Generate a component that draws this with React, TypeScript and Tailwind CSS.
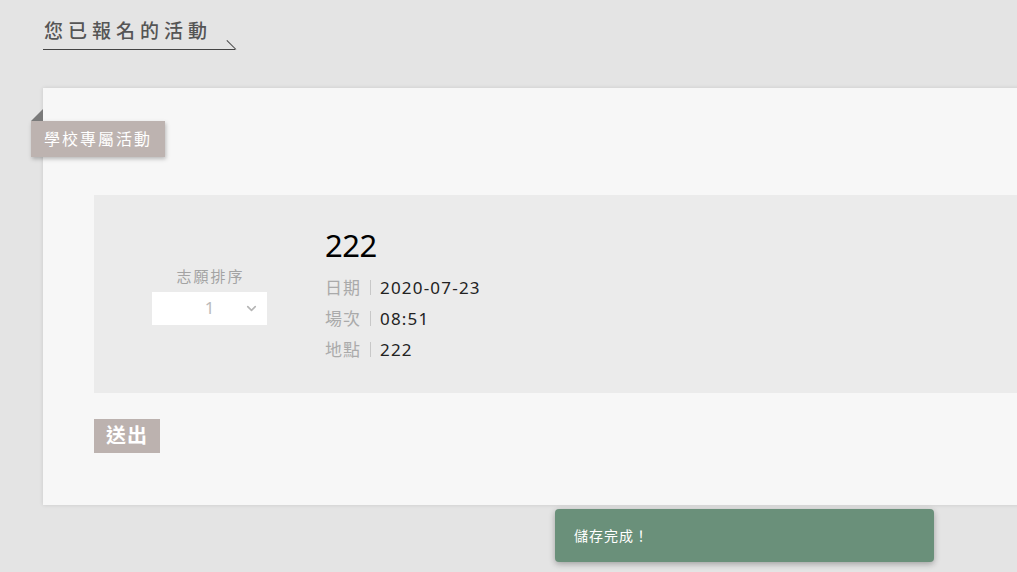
import { ChevronDown } from "lucide-react";

const font = { fontFamily: '"Noto Sans", "Noto Sans CJK TC", sans-serif' };

const rows = [
  { label: "日期", value: "2020-07-23" },
  { label: "場次", value: "08:51" },
  { label: "地點", value: "222" },
];

export default function App() {
  return (
    <div
      className="relative h-[572px] w-[1017px] overflow-hidden bg-[#e4e4e4]"
      style={font}
    >
      <div className="pl-[43px] pt-[17px]">
        <div className="relative inline-block pr-[23px] pb-[4px] border-b border-[#444]">
          <h2 className="pl-[1px] text-[19px] font-medium leading-[28px] tracking-[5px] text-[#555]">
            您已報名的活動
          </h2>
          <span className="absolute right-[-1px] bottom-[-1px] h-px w-[13px] origin-right rotate-[45deg] bg-[#444]" />
        </div>
      </div>

      <div className="relative mt-[38px] ml-[43px] w-[1000px] bg-[#f7f7f7] pl-[51px] pt-[107px] pb-[52px] shadow-[0_0_4px_rgba(0,0,0,0.12)]">
        <div className="absolute left-[-12px] top-[33px]">
          <span className="absolute left-0 top-[-12px] h-0 w-0 border-l-[12px] border-b-[12px] border-l-transparent border-b-[#7a7a7a]" />
          <div className="flex h-[36px] items-center bg-[#bdb3b0] px-[13px] text-[16px] tracking-[2px] text-white shadow-[1px_2px_4px_rgba(0,0,0,0.25)]">
            學校專屬活動
          </div>
        </div>

        <div className="flex h-[198px] items-center bg-[#ebebeb]">
          <div className="ml-[58px] flex w-[115px] flex-col items-center">
            <span className="pl-[2px] text-[15px] leading-[24px] tracking-[2px] text-[#a3a3a3]">志願排序</span>
            <div className="relative mt-[4px] flex h-[33px] w-[115px] items-center justify-center bg-white">
              <span className="text-[17px] text-[#bbbbbb]">1</span>
              <ChevronDown className="absolute right-[8px] top-[9px] h-[15px] w-[15px] text-[#b5b5b5]" strokeWidth={2.5} />
            </div>
          </div>

          <div className="ml-[58px] flex flex-col">
            <div className="mb-[6px] text-[31px] leading-[42px] text-black tracking-[-0.5px]">222</div>
            {rows.map((r) => (
              <div key={r.label} className="flex items-center text-[17px] leading-[31px]">
                <span className="tracking-[1px] text-[#aaaaaa]">{r.label}</span>
                <span className="ml-[9px] mr-[9px] h-[15px] w-px bg-[#c8c8c8]" />
                <span className="tracking-[1.2px] text-[#222]">{r.value}</span>
              </div>
            ))}
          </div>
        </div>

        <button className="mt-[26px] flex h-[34px] items-center bg-[#bcb2af] px-[12px] text-[20px] font-bold tracking-[1px] text-white">
          送出
        </button>
      </div>

      <div className="absolute left-[555px] top-[509px] flex h-[53px] w-[379px] items-center rounded-[4px] bg-[#6a907a] pl-[19px] text-[14px] tracking-[1px] text-white shadow-[0_2px_6px_rgba(0,0,0,0.3)]">
        儲存完成！
      </div>
    </div>
  );
}
